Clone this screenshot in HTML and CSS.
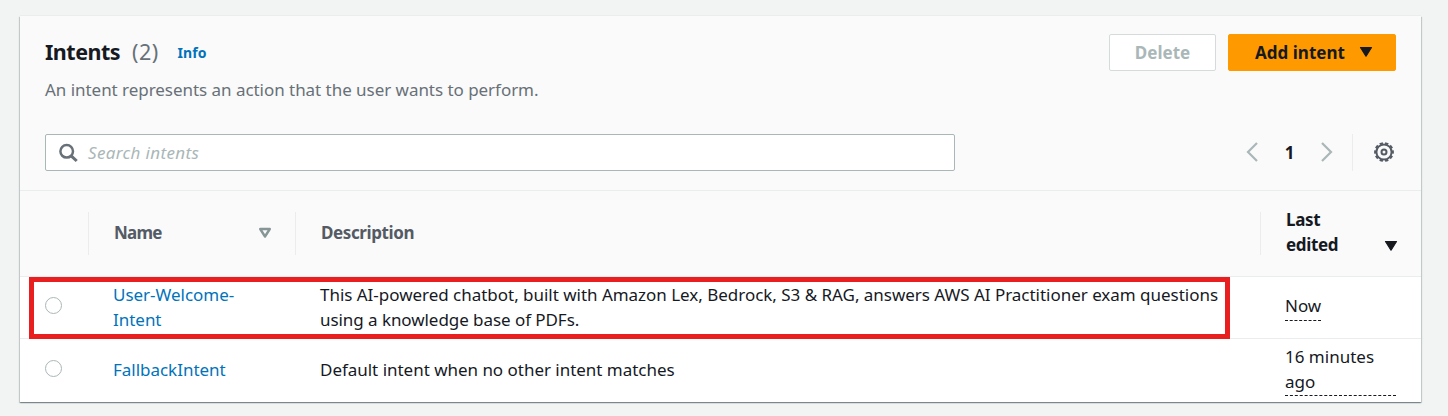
FILE: index.html
```html
<!DOCTYPE html>
<html lang="en">
<head>
<meta charset="utf-8">
<title>Intents</title>
<link rel="stylesheet" href="styles.css">
</head>
<body>
<main class="card">
  <header class="card-header">
    <div class="title-row">
      <div class="heading">
        <h2><span class="title">Intents</span><span class="count">(2)</span></h2>
        <a class="info">Info</a>
      </div>
      <div class="actions">
        <button class="btn btn-disabled"><span>Delete</span></button>
        <button class="btn btn-primary"><span>Add intent</span><svg width="14" height="12" viewBox="0 0 14 12"><path d="M1.5 1.5h11L7 10.2z" fill="#16191f" stroke="#16191f" stroke-width="1.2" stroke-linejoin="round"/></svg></button>
      </div>
    </div>
    <p class="description">An intent represents an action that the user wants to perform.</p>
    <div class="tools">
      <div class="search">
        <svg width="20" height="20" viewBox="0 0 20 20" fill="none" stroke="#687078" stroke-width="2.5"><circle cx="7.7" cy="8.3" r="6.3"/><path d="M12.2 12.8L17.7 18" stroke-width="3"/></svg>
        <span>Search intents</span>
      </div>
      <div class="pager">
        <svg width="12" height="20" viewBox="0 0 12 20" fill="none" stroke="#aab7b8" stroke-width="2.2"><path d="M11 1L2 10l9 9"/></svg>
        <span class="page">1</span>
        <svg width="12" height="20" viewBox="0 0 12 20" fill="none" stroke="#aab7b8" stroke-width="2.2"><path d="M1 1L10 10l-9 9"/></svg>
        <span class="divider"></span>
        <svg width="20" height="20" viewBox="0 0 20 20" fill="none" stroke="#545b64"><circle cx="10" cy="10" r="2.5" stroke-width="2"/><circle cx="10" cy="10" r="7.6" stroke-width="2"/><circle cx="10" cy="10" r="8.9" stroke-width="2" pathLength="20" stroke-dasharray="1.2 .8" stroke-dashoffset=".6"/></svg>
      </div>
    </div>
  </header>
  <section class="table">
    <div class="row head">
      <div class="cell pick"></div>
      <div class="cell name"><span class="t-name">Name</span><svg width="14" height="12" viewBox="0 0 14 12"><path d="M2.2 2h9.6L7 9.5z" fill="none" stroke="#879596" stroke-width="2.4" stroke-linejoin="round"/></svg></div>
      <div class="cell desc"><span class="t-desc">Description</span></div>
      <div class="cell edited active"><span class="t-last">Last<br>edited</span><svg width="14" height="12" viewBox="0 0 14 12"><path d="M1.5 1.5h11L7 10.2z" fill="#16191f" stroke="#16191f" stroke-width="1.2" stroke-linejoin="round"/></svg></div>
    </div>
    <div class="row">
      <div class="cell pick"><span class="radio"></span></div>
      <div class="cell name"><a class="text">User-Welcome-<br>Intent</a></div>
      <div class="cell desc"><span class="text">This AI-powered chatbot, built with Amazon Lex, Bedrock, S3 &amp; RAG, answers AWS AI Practitioner exam questions<br><span class="second">using a knowledge base of PDFs.</span></span></div>
      <div class="cell edited"><span class="date">Now</span></div>
      <div class="highlight"></div>
    </div>
    <div class="row">
      <div class="cell pick"><span class="radio"></span></div>
      <div class="cell name"><a class="text">FallbackIntent</a></div>
      <div class="cell desc"><span class="text">Default intent when no other intent matches</span></div>
      <div class="cell edited"><span class="date">16 minutes ago</span></div>
    </div>
  </section>
</main>
</body>
</html>
```
FILE: styles.css
```css
* { box-sizing: border-box; }
body {
  margin: 0;
  height: 416px;
  padding: 16px 27px 0 20px;
  overflow: hidden;
  background: #f2f3f3;
  color: #16191f;
  font: 17px/25px "Noto Sans", sans-serif;
  white-space: nowrap;
}
svg { display: block; flex: none; }
a { color: #0073bb; }
.card {
  height: 386px;
  background: #fff;
  box-shadow: 0 1px 1px 0 rgba(0, 28, 36, .3), 1px 1px 1px 0 rgba(0, 28, 36, .15), -1px 1px 1px 0 rgba(0, 28, 36, .15), 0 -1px 0 0 #eaeded;
}
.card-header {
  height: 175px;
  padding: 18px 25px 0;
  background: #fafafa;
  border-bottom: 1px solid #eaeded;
}
.title-row { display: flex; justify-content: space-between; height: 37px; }
.heading { display: flex; align-items: center; gap: 19px; }
h2 { display: flex; gap: 12px; margin: 0; font-size: 21.5px; line-height: 28px; padding-bottom: 2px; }
.title { letter-spacing: -.5px; }
.count { font-weight: 400; color: #687078; letter-spacing: .4px; }
.info { font-size: 14px; font-weight: 700; letter-spacing: .1px; }
.actions { display: flex; gap: 12px; }
.btn {
  display: flex;
  align-items: center;
  justify-content: center;
  height: 37px;
  padding: 0 0 1px;
  border: 1px solid;
  border-radius: 2px;
  font: 700 17px/25px "Noto Sans", sans-serif;
}
.btn-disabled { width: 107px; color: #aab7b8; background: #fff; border-color: #d5dbdb; }
.btn-primary { width: 168px; padding-left: 4px; gap: 14px; color: #16191f; background: #ff9900; border-color: #ff9900; }
.description { margin: 6px 0 0; color: #687078; height: 25px; letter-spacing: -.04px; }
.tools { display: flex; justify-content: space-between; margin-top: 32px; height: 37px; }
.search {
  display: flex;
  align-items: center;
  gap: 9px;
  width: 910px;
  padding-left: 13px;
  border: 1px solid #aab7b8;
  border-radius: 2px;
  background: #fff;
  color: #aab7b8;
  font-style: italic;
  letter-spacing: .35px;
}
.pager { display: flex; align-items: center; padding-right: 2px; }
.page { width: 63px; padding-bottom: 1px; text-align: center; font-weight: 700; }
.pager svg { margin-bottom: 1px; }
.divider { width: 1px; height: 37px; margin: 0 21px 0 19px; background: #eaeded; }
.row {
  position: relative;
  display: grid;
  grid-template-columns: 68px 207px 965px 161px;
  height: 62px;
  border-bottom: 1px solid #eaeded;
}
.row:last-child { height: 63px; border-bottom: 0; }
.cell { display: flex; align-items: center; }
.name { padding-left: 25px; }
.desc { padding-left: 25px; }
.edited { padding: 0 25px; }
.pick { padding-left: 25px; }
.head { height: 86px; background: #fafafa; color: #545b64; font-weight: 700; align-items: center; }
.head .cell { height: 43px; justify-content: space-between; }
.head .cell + .cell { border-left: 1px solid #eaeded; }
.head .name { padding-right: 23px; }
.head .edited { padding-right: 23px; }
.head .edited svg { align-self: flex-end; margin-bottom: 3px; }
.head svg { margin-bottom: 1px; }
.active { color: #16191f; }
.radio { width: 17px; height: 17px; border: 1px solid #aab7b8; border-radius: 50%; background: #fff; margin-bottom: 4px; }
.text { padding-bottom: 2px; letter-spacing: -.025px; }
.second { letter-spacing: -.06px; }
.date { line-height: 24.5px; padding-bottom: 1px; border-bottom: 1px dashed #16191f; white-space: normal; }
.t-name { letter-spacing: -.8px; padding-bottom: 2px; }
.t-desc { letter-spacing: -.4px; padding-bottom: 2px; }
.t-last { letter-spacing: -.35px; padding-bottom: 4px; }
.highlight { position: absolute; left: 9px; top: 0; width: 1201px; height: 62px; border: 5px solid #e81e1f; }
```
